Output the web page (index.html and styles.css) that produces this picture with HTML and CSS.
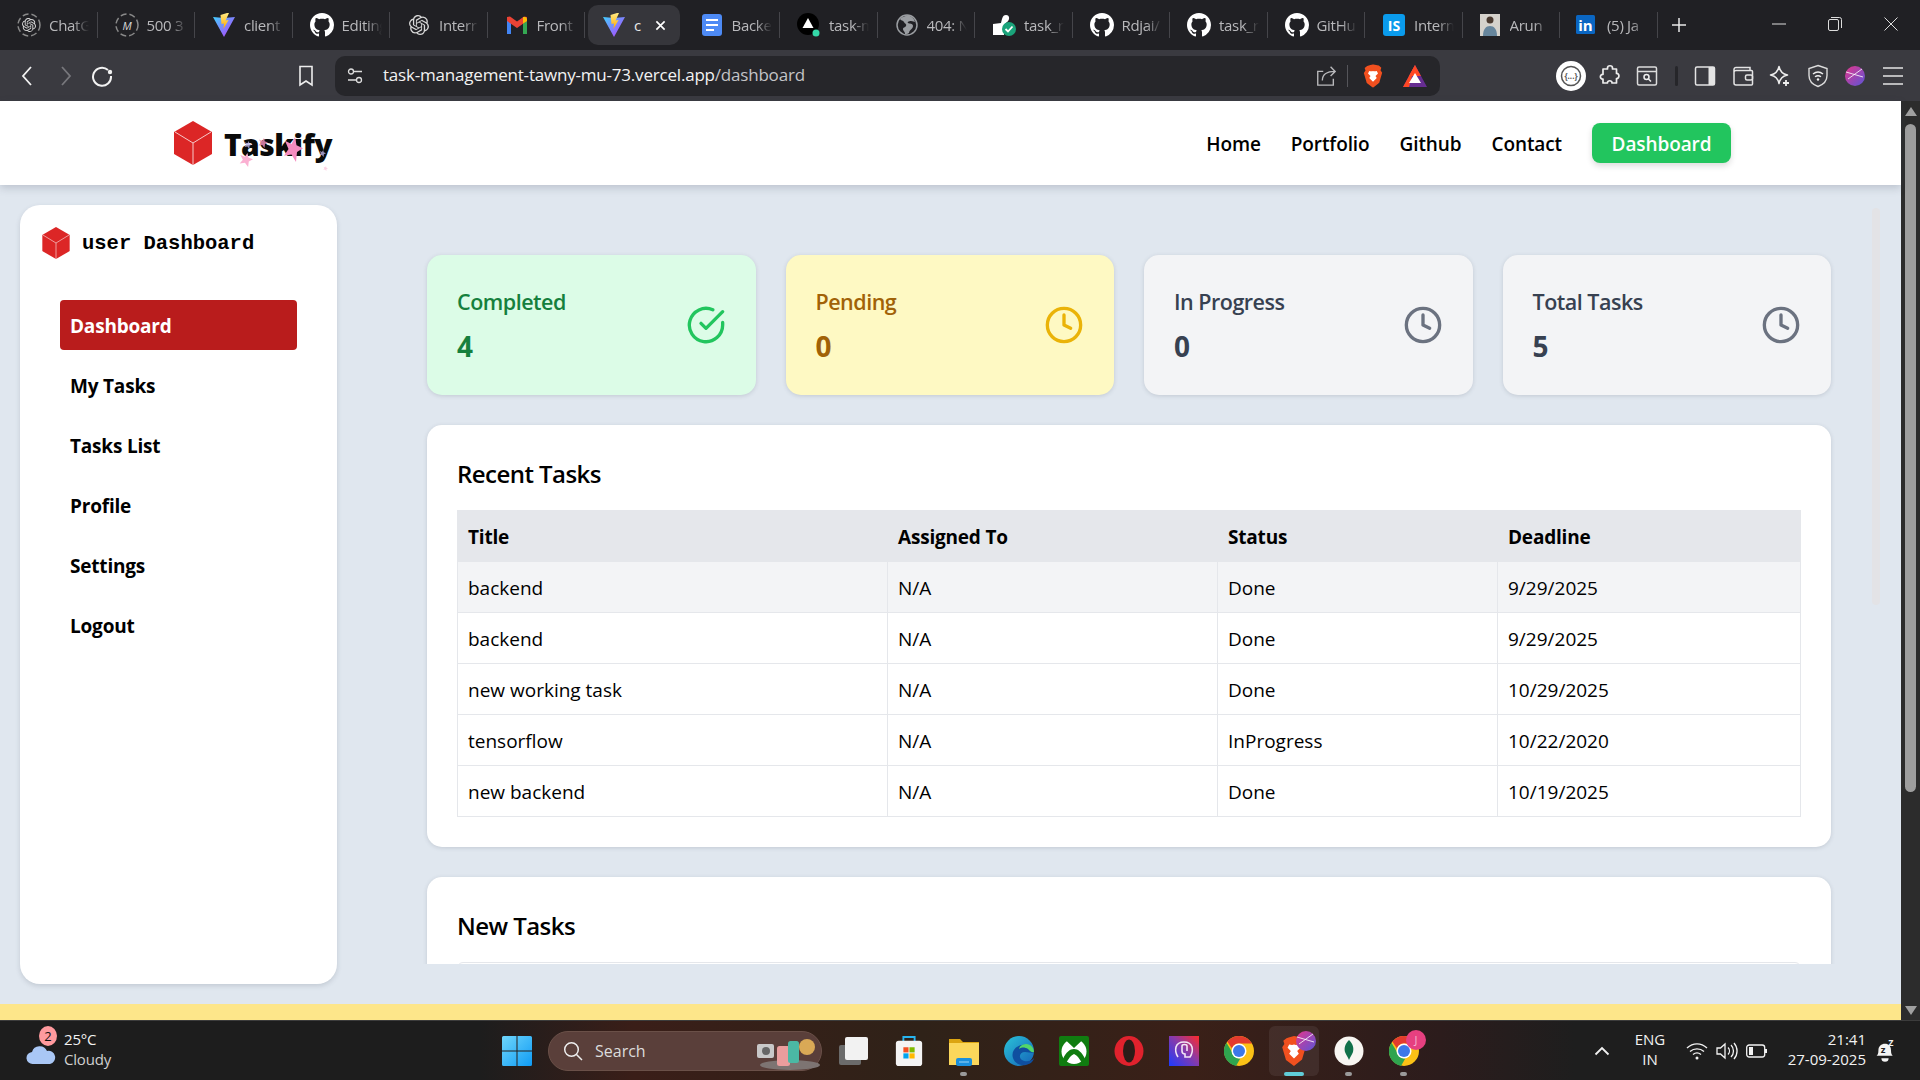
FILE: index.html
```html
<!DOCTYPE html>
<html lang="en">
<head>
<meta charset="utf-8">
<title>Taskify</title>
<link rel="stylesheet" href="styles.css">
</head>
<body>
<svg class="defs" width="0" height="0" aria-hidden="true">
  <defs>
    <linearGradient id="vb" x1="0" y1="0" x2="1" y2="1"><stop offset="0" stop-color="#41d1ff"/><stop offset="1" stop-color="#bd34fe"/></linearGradient>
    <linearGradient id="vy" x1="0" y1="0" x2="0" y2="1"><stop offset="0" stop-color="#ffea83"/><stop offset="1" stop-color="#ffa800"/></linearGradient>
    <linearGradient id="prof" x1="0" y1="0" x2="1" y2="1"><stop offset="0" stop-color="#e5368c"/><stop offset="1" stop-color="#5a55d8"/></linearGradient>
    <linearGradient id="winl" x1="0" y1="0" x2="1" y2="1"><stop offset="0" stop-color="#6fd6fb"/><stop offset="1" stop-color="#0f9bf5"/></linearGradient>
    <linearGradient id="purp" x1="0" y1="1" x2="1" y2="0"><stop offset="0" stop-color="#1d3bff"/><stop offset=".55" stop-color="#8a3aa8"/><stop offset="1" stop-color="#ff2a2a"/></linearGradient>
    <linearGradient id="edge" x1="0" y1="0" x2="1" y2="1"><stop offset="0" stop-color="#2bc3d8"/><stop offset="1" stop-color="#1463b8"/></linearGradient>
    <symbol id="gh" viewBox="0 0 16 16"><path fill="#fff" d="M8 0C3.58 0 0 3.58 0 8c0 3.54 2.29 6.53 5.47 7.59.4.07.55-.17.55-.38 0-.19-.01-.82-.01-1.49-2.01.37-2.53-.49-2.69-.94-.09-.23-.48-.94-.82-1.13-.28-.15-.68-.52-.01-.53.63-.01 1.08.58 1.23.82.72 1.21 1.87.87 2.33.66.07-.52.28-.87.51-1.07-1.78-.2-3.64-.89-3.64-3.95 0-.87.31-1.59.82-2.15-.08-.2-.36-1.02.08-2.12 0 0 .67-.21 2.2.82.64-.18 1.32-.27 2-.27.68 0 1.36.09 2 .27 1.53-1.04 2.2-.82 2.2-.82.44 1.1.16 1.92.08 2.12.51.56.82 1.27.82 2.15 0 3.07-1.87 3.75-3.65 3.95.29.25.54.73.54 1.48 0 1.07-.01 1.93-.01 2.2 0 .21.15.46.55.38A8.013 8.013 0 0016 8c0-4.42-3.58-8-8-8z"/></symbol>
    <symbol id="knot" viewBox="0 0 24 24"><path fill="#d8d8d8" d="M22.2819 9.8211a5.9847 5.9847 0 0 0-.5157-4.9108 6.0462 6.0462 0 0 0-6.5098-2.9A6.0651 6.0651 0 0 0 4.9807 4.1818a5.9847 5.9847 0 0 0-3.9977 2.9 6.0462 6.0462 0 0 0 .7427 7.0966 5.98 5.98 0 0 0 .511 4.9107 6.051 6.051 0 0 0 6.5146 2.9001A5.9847 5.9847 0 0 0 13.2599 24a6.0557 6.0557 0 0 0 5.7718-4.2058 5.9894 5.9894 0 0 0 3.9977-2.9001 6.0557 6.0557 0 0 0-.7475-7.0729zm-9.022 12.6081a4.4755 4.4755 0 0 1-2.8764-1.0408l.1419-.0804 4.7783-2.7582a.7948.7948 0 0 0 .3927-.6813v-6.7369l2.02 1.1686a.071.071 0 0 1 .038.052v5.5826a4.504 4.504 0 0 1-4.4945 4.4944zm-9.6607-4.1254a4.4708 4.4708 0 0 1-.5346-3.0137l.142.0852 4.783 2.7582a.7712.7712 0 0 0 .7806 0l5.8428-3.3685v2.3324a.0804.0804 0 0 1-.0332.0615L9.74 19.9502a4.4992 4.4992 0 0 1-6.1408-1.6464zM2.3408 7.8956a4.485 4.485 0 0 1 2.3655-1.9728V11.6a.7664.7664 0 0 0 .3879.6765l5.8144 3.3543-2.0201 1.1685a.0757.0757 0 0 1-.071 0l-4.8303-2.7865A4.504 4.504 0 0 1 2.3408 7.872zm16.5963 3.8558L13.1038 8.364 15.1192 7.2a.0757.0757 0 0 1 .071 0l4.8303 2.7913a4.4944 4.4944 0 0 1-.6765 8.1042v-5.6772a.79.79 0 0 0-.407-.667zm2.0107-3.0231l-.142-.0852-4.7735-2.7818a.7759.7759 0 0 0-.7854 0L9.409 9.2297V6.8974a.0662.0662 0 0 1 .0284-.0615l4.8303-2.7866a4.4992 4.4992 0 0 1 6.6802 4.66zM8.3065 12.863l-2.02-1.1638a.0804.0804 0 0 1-.038-.0567V6.0742a4.4992 4.4992 0 0 1 7.3757-3.4537l-.142.0805L8.704 5.459a.7948.7948 0 0 0-.3927.6813zm1.0976-2.3654l2.602-1.4998 2.6069 1.4998v2.9994l-2.5974 1.4997-2.6067-1.4997Z"/></symbol>
    <symbol id="vite" viewBox="0 0 24 24"><path fill="url(#vb)" d="M1 4l11 1 11-1-11 20z"/><path fill="url(#vy)" d="M15 0 8.500 2 9.500 11l2.500-.6-.6 5.600 5.200-9-3 .6L17 0z"/></symbol>
    <symbol id="cube" viewBox="0 0 38 44"><path fill="#dc2626" d="M19 0 38 11v22L19 44 0 33V11z"/><path fill="none" stroke="#f6c9c9" stroke-width="1" d="M1 11 19 22 37 11M19 22v22"/></symbol>
    <symbol id="clock" viewBox="0 0 24 24"><circle cx="12" cy="12" r="10" fill="none" stroke="currentColor" stroke-width="2"/><path d="M12 6v6l4 2" fill="none" stroke="currentColor" stroke-width="2" stroke-linecap="round" stroke-linejoin="round"/></symbol>
    <symbol id="star" viewBox="0 0 20 20"><path fill="currentColor" d="M12 0 13.500 6.500 20 9 14 12 13 20 8.500 14 1 15 5.500 9.500 2 3 8.500 5.500z"/></symbol>
    <symbol id="chrome" viewBox="0 0 30 30"><circle cx="15" cy="15" r="15" fill="#fbc116"/><path fill="#e33b2e" d="M15 0a15 15 0 0 1 13 7.500H15a7.500 7.500 0 0 0-7 5L3.300 5.600A15 15 0 0 1 15 0z"/><path fill="#2fa44f" d="M2.500 6.800 9.800 19a7.500 7.500 0 0 0 6.500 3.500L12 30A15 15 0 0 1 2.500 6.800z"/><circle cx="15" cy="15" r="7.500" fill="#fff"/><circle cx="15" cy="15" r="6" fill="#3c78e8"/></symbol>
    <symbol id="brave" viewBox="0 0 24 28"><path fill="#f1501f" d="M12 0l5 1 2 .5 3 2.500-1 3 2 3-3.500 12L12 28l-7.500-5.500L1 10.500l2-3-1-3 3-2.500 2-.5z"/><path fill="#fff" d="M12 8c1 .6 3 .4 4.500 0l1.500 3-3 3 1.500 2.500L12 21l-4.500-4.500L9 14l-3-3 1.500-3c1.500.4 3.500.6 4.500 0z"/></symbol>
  </defs>
</svg>

<header class="tabstrip">
  <div class="tab"><svg class="tab-ico" viewBox="0 0 24 24"><circle cx="12" cy="12" r="11" fill="none" stroke="#8a8a8a" stroke-width="1.5" stroke-dasharray="6 3"/><use href="#knot" x="5" y="5" width="14" height="14"/></svg><span class="tab-text">ChatGPT</span></div>
  <div class="tab"><svg class="tab-ico" viewBox="0 0 24 24"><circle cx="12" cy="12" r="11" fill="none" stroke="#8a8a8a" stroke-width="1.5" stroke-dasharray="6 3"/><text x="12" y="16.500" text-anchor="middle" class="m-ico">M</text></svg><span class="tab-text">500 3</span></div>
  <div class="tab"><svg class="tab-ico" viewBox="0 0 24 24"><use href="#vite"/></svg><span class="tab-text">client</span></div>
  <div class="tab"><svg class="tab-ico" viewBox="0 0 24 24"><use href="#gh"/></svg><span class="tab-text">Editing</span></div>
  <div class="tab"><svg class="tab-ico tab-ico-sm" viewBox="0 0 24 24"><use href="#knot"/></svg><span class="tab-text">Interr</span></div>
  <div class="tab"><svg class="tab-ico" viewBox="0 0 24 24"><path fill="#4285f4" d="M2 7v14h4V10z"/><path fill="#34a853" d="M18 10v11h4V7z"/><path fill="#ea4335" d="M2 4v4l10 7 10-7V4l-3-.5-7 5-7-5z"/><path fill="#fbbc04" d="M18 4h2.500L22 5.500V8l-4 2.500z"/></svg><span class="tab-text">Front</span></div>
  <div class="tab tab-active"><svg class="tab-ico" viewBox="0 0 24 24"><use href="#vite"/></svg><span class="tab-text tab-text-short">c</span><svg class="tab-x" viewBox="0 0 12 12"><path d="M1.500 1.500l9 9M10.500 1.500l-9 9" stroke="#fff" stroke-width="1.800" fill="none"/></svg></div>
  <div class="tab"><svg class="tab-ico" viewBox="0 0 24 24"><rect x="2" y="1" width="20" height="22" rx="3" fill="#4d8af5"/><path d="M6 7h12M6 12h12M6 17h8" stroke="#fff" stroke-width="2.200"/></svg><span class="tab-text">Backe</span></div>
  <div class="tab"><svg class="tab-ico" viewBox="0 0 24 24"><circle cx="11" cy="11" r="11" fill="#000"/><path d="M11 5l5.500 10h-11z" fill="#fff"/><circle cx="19" cy="20" r="3.500" fill="#34d8a8"/></svg><span class="tab-text">task-m</span></div>
  <div class="tab"><svg class="tab-ico" viewBox="0 0 24 24"><circle cx="12" cy="12" r="10" fill="none" stroke="#9a9da1" stroke-width="1.500"/><path fill="#9a9da1" d="M12 2c-1 2-5 1-7 4 1 2 3 1 4 3s3 2 2 4-3 1-3 3 2 2 2 5c1 0 3 0 4-1 0-3 4-4 4-7s-4-2-5-3 1-2 3-2 3 1 4 1c-1-4-4-6-8-7z"/></svg><span class="tab-text">404: N</span></div>
  <div class="tab"><svg class="tab-ico" viewBox="0 0 24 24"><path d="M1 11l8-1c1-3 1-8 5-8 4 0 4 5 1 7l-3 3v10H1z" fill="#fff"/><circle cx="17" cy="16" r="7" fill="#1aa37a"/><path d="M13.500 16l2.500 2.500 4.500-5" stroke="#fff" stroke-width="1.800" fill="none"/></svg><span class="tab-text">task_r</span></div>
  <div class="tab"><svg class="tab-ico" viewBox="0 0 24 24"><use href="#gh"/></svg><span class="tab-text">Rdjai/</span></div>
  <div class="tab"><svg class="tab-ico" viewBox="0 0 24 24"><use href="#gh"/></svg><span class="tab-text">task_r</span></div>
  <div class="tab"><svg class="tab-ico" viewBox="0 0 24 24"><use href="#gh"/></svg><span class="tab-text">GitHu</span></div>
  <div class="tab"><svg class="tab-ico" viewBox="0 0 24 24"><rect x="1" y="1" width="22" height="22" rx="3" fill="#0a9bec"/><text x="12" y="17.500" text-anchor="middle" class="is-ico">IS</text></svg><span class="tab-text">Intern</span></div>
  <div class="tab tab-tight"><svg class="tab-ico" viewBox="0 0 24 24"><rect x="2" y="1" width="20" height="22" fill="#d5d2cc"/><circle cx="12" cy="7" r="3.500" fill="#4a3a30"/><path d="M5 23c0-7 3-10 7-10s7 3 7 10z" fill="#66859c"/></svg><span class="tab-text">Arun</span></div>
  <div class="tab tab-last"><svg class="tab-ico" viewBox="0 0 24 24"><rect x="3" y="2" width="19" height="19" rx="1.500" fill="#0a66c2"/><text x="12.500" y="18" text-anchor="middle" class="in-ico">in</text></svg><span class="tab-text">(5) Ja</span></div>
  <svg class="plus" viewBox="0 0 14 14"><path d="M7 0v14M0 7h14" stroke="#e8e8e8" stroke-width="1.500"/></svg>
  <div class="winctl">
    <svg class="wc" viewBox="0 0 14 14"><path d="M0 7h14" stroke="#ddd" stroke-width="1"/></svg>
    <svg class="wc" viewBox="0 0 14 14"><rect x=".5" y="2.500" width="10" height="11" rx="1.500" fill="none" stroke="#ddd"/><path d="M3 .5h8.500a2 2 0 0 1 2 2V11" fill="none" stroke="#ddd"/></svg>
    <svg class="wc" viewBox="0 0 14 14"><path d="M.5.500l13 13M13.500.500l-13 13" stroke="#ddd" stroke-width="1"/></svg>
  </div>
</header>

<nav class="toolbar">
  <div class="tb-left">
    <svg class="tb-ico" viewBox="0 0 24 24"><path d="M16 3 8 12l8 9" fill="none" stroke="#f2f2f2" stroke-width="1.800"/></svg>
    <svg class="tb-ico" viewBox="0 0 24 24"><path d="M9 3l8 9-8 9" fill="none" stroke="#77777c" stroke-width="1.800"/></svg>
    <svg class="tb-ico" viewBox="0 0 24 24"><path d="M17 6a9 9 0 1 0 3 6" fill="none" stroke="#f2f2f2" stroke-width="2"/><circle cx="19" cy="8" r="2.200" fill="#f2f2f2"/></svg>
  </div>
  <svg class="tb-ico bookmark" viewBox="0 0 24 24"><path d="M6 2.500h12V21l-6-4-6 4z" fill="none" stroke="#ededed" stroke-width="1.600"/></svg>
  <div class="omnibox">
    <svg class="site-ico" viewBox="0 0 18 18"><circle cx="5" cy="4.500" r="2.500" fill="none" stroke="#ddd" stroke-width="1.300"/><path d="M8 4.500h8M2 13h8" stroke="#ddd" stroke-width="1.300"/><circle cx="13" cy="13" r="2.500" fill="none" stroke="#ddd" stroke-width="1.300"/></svg>
    <span class="url"><span class="url-host">task-management-tawny-mu-73.vercel.app</span>/dashboard</span>
    <svg class="share" viewBox="0 0 24 24"><path d="M9 7H3v15h17v-7M8 17c0-6 4-10 14-10M17 2l5 5-5 5" fill="none" stroke="#b9b9bc" stroke-width="1.500"/></svg>
    <span class="omni-sep"></span>
    <svg class="brave-sm" viewBox="0 0 24 28"><use href="#brave"/></svg>
    <svg class="bat" viewBox="0 0 24 22"><path d="M12 0l12 22H0z" fill="#662d91"/><path d="M12 0l6 11H6z" fill="#ff4724"/><path d="M0 22 12 0 6 22z" fill="#ff4724"/><path d="M12 8l6 10H6z" fill="#fff"/></svg>
  </div>
  <div class="tb-right">
    <svg class="tb-ext" viewBox="0 0 30 30"><circle cx="15" cy="15" r="15" fill="#fff"/><circle cx="15" cy="15" r="9.500" fill="none" stroke="#555" stroke-width="1.500"/><text x="15" y="18" text-anchor="middle" class="ext-text">{...}</text></svg>
    <svg class="tb-ext" viewBox="0 0 24 24"><path d="M9.500 4c0-3 5-3 5 0v1h4v4.500c3-.5 3.500 5 0 5V19h-4.500c.5-3-5-3-4.500 0H5v-4c-3.500.5-3.500-5 0-4.500V5h4.500z" fill="none" stroke="#ededed" stroke-width="1.700" stroke-linejoin="round"/></svg>
    <svg class="tb-ext" viewBox="0 0 24 24"><rect x="2.500" y="3" width="19" height="18" rx="1.500" fill="none" stroke="#dcdcdc" stroke-width="1.500"/><path d="M2.500 7.500h19" stroke="#dcdcdc" stroke-width="1.500"/><circle cx="11.500" cy="13" r="2.500" fill="none" stroke="#eee" stroke-width="1.500"/><path d="M13.500 15l2.500 2.500" stroke="#eee" stroke-width="1.500"/></svg>
    <span class="tb-sep"></span>
    <svg class="tb-ext" viewBox="0 0 24 24"><rect x="2.500" y="3" width="19" height="18" rx="1.500" fill="none" stroke="#e4e4e4" stroke-width="1.500"/><rect x="15.500" y="3" width="6" height="18" fill="#e4e4e4"/></svg>
    <svg class="tb-ext" viewBox="0 0 24 24"><path d="M3 8V5.500A2 2 0 0 1 5 3.500h14v3M3 8a2 2 0 0 1 2-1.500h15.500a1 1 0 0 1 1 1V20a1 1 0 0 1-1 1H5a2 2 0 0 1-2-2z" fill="none" stroke="#e4e4e4" stroke-width="1.500"/><rect x="14.500" y="11" width="7" height="5" rx="1.500" fill="none" stroke="#e4e4e4" stroke-width="1.500"/></svg>
    <svg class="tb-ext" viewBox="0 0 24 24"><path d="M11 2.500c1 5 3 7.500 8.500 8.500-5.500 1-7.500 3.500-8.500 8.500-1-5-3-7.500-8.500-8.500 5.500-1 7.500-3.500 8.500-8.500z" fill="none" stroke="#ededed" stroke-width="1.500" stroke-linejoin="round"/><path d="M18 16v6M15 19h6" stroke="#ededed" stroke-width="1.800"/></svg>
    <svg class="tb-ext" viewBox="0 0 24 24"><path d="M12 1.500l9 3v7c0 5.500-3.500 9-9 11-5.500-2-9-5.500-9-11v-7z" fill="none" stroke="#dcdcdc" stroke-width="1.400"/><path d="M7 10c3-2.500 7-2.500 10 0M9 12.800c2-1.500 4-1.500 6 0" fill="none" stroke="#eee" stroke-width="1.400"/><circle cx="12" cy="15.500" r="1.200" fill="#eee"/></svg>
    <svg class="tb-ext tb-prof" viewBox="0 0 20 20"><circle cx="10" cy="10" r="10" fill="url(#prof)"/><path d="M1 6l17 5M3 13 17 3" stroke="#fff" stroke-width=".8"/></svg>
    <svg class="tb-ext" viewBox="0 0 24 24"><path d="M2 4h20M2 12h20M2 20h20" stroke="#e4e4e4" stroke-width="1.500"/></svg>
  </div>
</nav>

<div class="viewport">
  <div class="page">
    <div class="sitebar">
      <div class="brand">
        <svg class="brand-cube" viewBox="0 0 38 44"><use href="#cube"/></svg>
        <span class="brand-name">Taskify</span>
        <svg class="spark spark-e" viewBox="0 0 20 20"><use href="#star"/></svg>
        <svg class="spark spark-f" viewBox="0 0 20 20"><use href="#star"/></svg>
        <svg class="spark spark-a" viewBox="0 0 20 20"><use href="#star"/></svg>
        <svg class="spark spark-b" viewBox="0 0 20 20"><use href="#star"/></svg>
        <svg class="spark spark-c" viewBox="0 0 20 20" preserveAspectRatio="none"><use href="#star"/></svg>
        <svg class="spark spark-d" viewBox="0 0 20 20"><use href="#star"/></svg>
      </div>
      <div class="sitelinks">
        <a class="sitelink">Home</a>
        <a class="sitelink">Portfolio</a>
        <a class="sitelink">Github</a>
        <a class="sitelink">Contact</a>
        <a class="cta">Dashboard</a>
      </div>
    </div>

    <div class="workspace">
      <aside class="sidebar">
        <div class="side-head">
          <svg class="side-cube" viewBox="0 0 38 44"><use href="#cube"/></svg>
          <span class="side-title">user Dashboard</span>
        </div>
        <ul class="side-menu">
          <li class="side-item side-item-active">Dashboard</li>
          <li class="side-item">My Tasks</li>
          <li class="side-item">Tasks List</li>
          <li class="side-item">Profile</li>
          <li class="side-item">Settings</li>
          <li class="side-item">Logout</li>
        </ul>
      </aside>

      <main class="main">
        <span class="ghost-track"></span>
        <section class="stats">
          <div class="stat stat-green">
            <div><p class="stat-label">Completed</p><p class="stat-value">4</p></div>
            <svg class="stat-ico ico-green" viewBox="0 0 24 24"><path d="M22 10.500V12a10 10 0 1 1-5.900-9.100" fill="none" stroke="currentColor" stroke-width="2" stroke-linecap="round"/><path d="M22 4 12 14l-3-3" fill="none" stroke="currentColor" stroke-width="2" stroke-linecap="round" stroke-linejoin="round"/></svg>
          </div>
          <div class="stat stat-yellow">
            <div><p class="stat-label">Pending</p><p class="stat-value">0</p></div>
            <svg class="stat-ico ico-yellow" viewBox="0 0 24 24"><use href="#clock"/></svg>
          </div>
          <div class="stat stat-gray">
            <div><p class="stat-label">In Progress</p><p class="stat-value">0</p></div>
            <svg class="stat-ico ico-gray" viewBox="0 0 24 24"><use href="#clock"/></svg>
          </div>
          <div class="stat stat-gray">
            <div><p class="stat-label">Total Tasks</p><p class="stat-value">5</p></div>
            <svg class="stat-ico ico-gray" viewBox="0 0 24 24"><use href="#clock"/></svg>
          </div>
        </section>

        <section class="panel">
          <h2 class="panel-title">Recent Tasks</h2>
          <table class="tasks">
            <colgroup><col class="c1"><col class="c2"><col class="c3"><col class="c4"></colgroup>
            <thead><tr><th>Title</th><th>Assigned To</th><th>Status</th><th>Deadline</th></tr></thead>
            <tbody>
              <tr class="row-alt"><td>backend</td><td>N/A</td><td>Done</td><td>9/29/2025</td></tr>
              <tr><td>backend</td><td>N/A</td><td>Done</td><td>9/29/2025</td></tr>
              <tr><td>new working task</td><td>N/A</td><td>Done</td><td>10/29/2025</td></tr>
              <tr><td>tensorflow</td><td>N/A</td><td>InProgress</td><td>10/22/2020</td></tr>
              <tr><td>new backend</td><td>N/A</td><td>Done</td><td>10/19/2025</td></tr>
            </tbody>
          </table>
        </section>

        <section class="panel panel-last">
          <h2 class="panel-title">New Tasks</h2>
          <div class="stub-table"></div>
        </section>
      </main>
    </div>

    <div class="footer-strip"></div>
  </div>
  <div class="scrollbar">
    <span class="sb-arrow sb-up"></span>
    <span class="sb-thumb"></span>
    <span class="sb-arrow sb-down"></span>
  </div>
</div>

<footer class="taskbar">
  <div class="weather">
    <svg class="cloud" viewBox="0 0 30 22"><path d="M7 21a6 6 0 0 1-1-12 8 8 0 0 1 15-1 6.500 6.500 0 0 1 3 13z" fill="#a9c7f5"/></svg>
    <span class="w-badge">2</span>
    <div class="w-text"><span>25°C</span><span class="w-sub">Cloudy</span></div>
  </div>
  <div class="tb-center">
    <svg class="winlogo" viewBox="0 0 30 30"><path fill="url(#winl)" d="M0 1.500A1.500 1.500 0 0 1 1.500 0H14.500V14.500H0zM15.500 0H28.500A1.500 1.500 0 0 1 30 1.500V14.500H15.500zM0 15.500H14.500V30H1.500A1.500 1.500 0 0 1 0 28.500zM15.500 15.500H30V28.500A1.500 1.500 0 0 1 28.500 30H15.500z"/></svg>
    <div class="searchbox">
      <svg class="search-ico" viewBox="0 0 20 20"><circle cx="8.500" cy="8.500" r="6.800" fill="none" stroke="#eee" stroke-width="1.500"/><path d="M13.500 13.500 19 19" stroke="#eee" stroke-width="1.500"/></svg>
      <span class="search-text">Search</span>
      <svg class="search-art" viewBox="0 0 64 32"><ellipse cx="33" cy="26" rx="30" ry="5" fill="#7d7472"/><rect x="0" y="5" width="17" height="14" rx="2" fill="#c8c8c8"/><circle cx="9" cy="12" r="4" fill="#666"/><rect x="20" y="7" width="13" height="20" rx="2.500" fill="#ea9d9d"/><rect x="31" y="2" width="11" height="22" rx="2.500" fill="#4bb8a4"/><circle cx="50" cy="8" r="8" fill="#d9a956"/></svg>
    </div>
    <div class="apps">
      <span class="app"><svg viewBox="0 0 30 30"><rect x="0" y="9" width="22" height="20" rx="2" fill="#6b6b6b"/><rect x="6" y="1" width="23" height="23" rx="2" fill="#f2f2f2"/></svg></span>
      <span class="app"><svg viewBox="0 0 30 32"><path d="M9 6V1h12v5" fill="none" stroke="#27b5ef" stroke-width="2"/><rect x="1" y="5" width="28" height="27" rx="3" fill="#f4f4f4"/><rect x="9" y="12" width="5.500" height="5.500" fill="#f25022"/><rect x="15.500" y="12" width="5.500" height="5.500" fill="#7fba00"/><rect x="9" y="18.500" width="5.500" height="5.500" fill="#00a4ef"/><rect x="15.500" y="18.500" width="5.500" height="5.500" fill="#ffb900"/></svg></span>
      <span class="app"><svg viewBox="0 0 30 30"><path d="M0 3h11l3 3h16v23H0z" fill="#dca511"/><rect x="0" y="7" width="30" height="22" fill="#fbd75b"/><rect x="7" y="22" width="16" height="8" rx="2" fill="#1a8fdc"/><path d="M10 26h10" stroke="#9ad6f8"/></svg><i class="dot"></i></span>
      <span class="app"><svg viewBox="0 0 30 30"><circle cx="15" cy="15" r="15" fill="url(#edge)"/><path d="M30 17c0-6-6-9-12-8-7 1-11 7-9 13 1.500 5 7 8 13 7 4-1 7-3 8-7-3 4-9 4-12 2-4-3-2-8 3-8 3 0 5 1 9 1z" fill="#0f4fa0"/><path d="M30 16c0-4-3-8-8-8-4 0-7 3-7 5 2-2 6-2 9 0 2 2 4 4 6 3z" fill="#52d66a"/></svg></span>
      <span class="app"><svg viewBox="0 0 30 30"><rect width="30" height="30" rx="2" fill="#107c10"/><circle cx="15" cy="15.500" r="12.500" fill="#fff"/><path d="M6 3.500 15 12l9-8.500v-3H6zM4 23c3-7 7-10 11-10 4 0 8 3 11 10l-3 4c-3-5-5-8-8-9-3 1-5 4-8 9z" fill="#107c10"/></svg></span>
      <span class="app"><svg viewBox="0 0 30 30"><ellipse cx="15" cy="15" rx="14.500" ry="15" fill="#e0222d"/><ellipse cx="15" cy="15" rx="6" ry="11.500" fill="#2a1c18"/></svg></span>
      <span class="app"><svg viewBox="0 0 30 30"><rect width="30" height="30" fill="url(#purp)"/><path d="M9 21c-2-3-3-6-2-10 1-3 4-5 8-5s7 2 8 5c1 4 0 7-2 10h-5v-3c-2 0-3-1-3-3v-5c0-2 5-2 5 0v5" fill="none" stroke="#f2e4f5" stroke-width="1.600"/></svg></span>
      <span class="app"><svg viewBox="0 0 30 30"><use href="#chrome"/></svg></span>
      <span class="app app-active"><svg class="brave-big" viewBox="0 0 24 28"><use href="#brave"/></svg><svg class="pwa-badge" viewBox="0 0 20 20"><circle cx="10" cy="10" r="10" fill="url(#prof)"/><path d="M1 6l17 5M3 13 17 3" stroke="#fff" stroke-width=".8"/></svg><i class="dot dot-active"></i></span>
      <span class="app"><svg viewBox="0 0 30 30"><circle cx="15" cy="15" r="14.500" fill="#f8f6f2"/><path d="M15 4c4 4 5 8 4 12-1 3-3 5-4 8-1-3-3-5-4-8-1-4 0-8 4-12z" fill="#11714a"/></svg><i class="dot"></i></span>
      <span class="app"><svg viewBox="0 0 30 30"><use href="#chrome"/></svg><span class="j-badge">J</span><i class="dot"></i></span>
    </div>
  </div>
  <div class="tray">
    <svg class="chev" viewBox="0 0 16 10"><path d="M1.500 8.500 8 2l6.500 6.500" fill="none" stroke="#f2f2f2" stroke-width="1.800"/></svg>
    <div class="lang"><span>ENG</span><span>IN</span></div>
    <svg class="tr-wifi" viewBox="0 0 22 18"><path d="M1 6c6-5.500 14-5.500 20 0M4 9.500c4-3.500 10-3.500 14 0M7 12.500c2.500-2 5.500-2 8 0" fill="none" stroke="#f2f2f2" stroke-width="1.400"/><circle cx="11" cy="16" r="1.500" fill="#f2f2f2"/></svg>
    <svg class="tr-vol" viewBox="0 0 22 18"><path d="M1 6h3.500L9 2v14l-4.500-4H1z" fill="none" stroke="#f2f2f2" stroke-width="1.300"/><path d="M12 5.500a5 5 0 0 1 0 7M15 3a8.500 8.500 0 0 1 0 12M18 1a12 12 0 0 1 0 16" fill="none" stroke="#f2f2f2" stroke-width="1.300"/></svg>
    <svg class="tr-bat" viewBox="0 0 22 14"><rect x=".7" y="1" width="18" height="12" rx="2.500" fill="none" stroke="#f2f2f2" stroke-width="1.300"/><rect x="3" y="3" width="4" height="8" fill="#f2f2f2"/><path d="M20 5v4" stroke="#f2f2f2" stroke-width="2"/></svg>
    <div class="clock"><span>21:41</span><span>27-09-2025</span></div>
    <svg class="bell" viewBox="0 0 20 20"><path d="M3 14c1-1 1.500-2 1.500-4.500C4.500 6 7 4 10 4s5 2 5 5.500c0 2.500.5 3.500 1.500 4.500z" fill="#f4f4f4"/><path d="M7 16a3 3 0 0 0 6 0z" fill="#f4f4f4"/><text x="6.500" y="12" class="zz1">z</text><text x="13" y="6" class="zz2">Z</text></svg>
  </div>
</footer>
</body>
</html>
```

FILE: styles.css
```css
* { box-sizing: border-box; margin: 0; padding: 0; }
html, body { height: 100%; overflow: hidden; }
body {
  width: 1920px;
  height: 1080px;
  display: flex;
  flex-direction: column;
  font-family: "Open Sans", "Noto Sans", sans-serif;
  background: #202024;
}
.defs { position: absolute; }

/* ---------- tab strip ---------- */
.tabstrip {
  height: 50px;
  flex: none;
  display: flex;
  align-items: center;
  background: #202024;
  color: #b8b8bb;
  font-size: 15px;
}
.tab {
  width: 97.500px;
  height: 40px;
  flex: none;
  display: flex;
  align-items: center;
  padding-left: 17px;
  gap: 8px;
  border-right: 1px solid #45454a;
  border-image: linear-gradient(transparent 20%, #45454a 20%, #45454a 80%, transparent 80%) 1;
}
.tab-tight { padding-left: 15px; }
.tab-last { padding-left: 13px; gap: 10px; }
.tab-active {
  background: #36363b;
  border-radius: 10px;
  border: 0;
  width: 92px;
  margin: 0 2.500px 0 3px;
  padding-left: 14px;
  color: #e8e8e8;
}
.tab-ico { width: 24px; height: 24px; flex: none; }
.tab-ico-sm { width: 20px; height: 20px; margin: 0 2px; }
.tab-text {
  width: 40px;
  overflow: hidden;
  white-space: nowrap;
  -webkit-mask-image: linear-gradient(90deg, #000 60%, transparent 100%);
  mask-image: linear-gradient(90deg, #000 60%, transparent 100%);
  letter-spacing: -.3px;
}
.tab-text-short { width: 9px; -webkit-mask-image: none; mask-image: none; }
.tab-x { width: 11px; height: 11px; margin-left: 4px; flex: none; }
.m-ico { font: italic 500 11px "Open Sans", sans-serif; fill: #d8d8d8; }
.is-ico { font: 700 14px "Open Sans", sans-serif; fill: #fff; }
.in-ico { font: 700 15px "Open Sans", sans-serif; fill: #fff; }
.ext-text { font: 700 8px "Open Sans", sans-serif; fill: #555; }
.plus { width: 14px; height: 14px; margin-left: 14px; flex: none; }
.winctl {
  margin-left: auto;
  width: 236px;
  padding: 0 22px 2px 86px;
  display: flex;
  justify-content: space-between;
}
.wc { width: 14px; height: 14px; }

/* ---------- toolbar ---------- */
.toolbar {
  height: 51px;
  flex: none;
  display: flex;
  align-items: center;
  background: #3a3a40;
  padding-left: 8px;
}
.tb-left { display: flex; width: 280px; }
.tb-ico { width: 24px; height: 24px; margin: 0 7px; flex: none; }
.bookmark { margin: 0 0 0 6px; width: 24px; }
.omnibox {
  margin-left: 17px;
  width: 1105px;
  height: 40px;
  flex: none;
  display: flex;
  align-items: center;
  padding: 0 13px 0 11px;
  background: #26262a;
  border-radius: 10px;
  color: #c4c4c7;
  font-size: 17px;
}
.site-ico { width: 18px; height: 18px; flex: none; }
.url { margin-left: 19px; margin-bottom: 2px; flex: 1; white-space: nowrap; letter-spacing: -.2px; }
.url-host { color: #f2f2f2; }
.share { width: 22px; height: 22px; flex: none; }
.omni-sep { width: 1px; height: 22px; background: #55555a; margin: 0 15px 0 10px; }
.brave-sm { width: 20px; height: 24px; flex: none; }
.bat { width: 24px; height: 22px; margin-left: 20px; flex: none; }
.tb-right { margin-left: 116px; display: flex; align-items: center; gap: 13.500px; }
.tb-ext { width: 24px; height: 24px; flex: none; }
.tb-right .tb-ext:first-child { width: 30px; height: 30px; margin-right: -2px; }
.tb-sep { width: 3px; height: 20px; background: #26262a; border-radius: 2px; margin: 0 2px; }
.tb-right .tb-prof { width: 20px; height: 20px; margin: 0 2px; }

/* ---------- page ---------- */
.viewport { flex: 1; min-height: 0; display: flex; }
.page {
  width: 1901px;
  display: flex;
  flex-direction: column;
  background: #e0e7ef;
  color: #000;
}
.sitebar {
  height: 84px;
  flex: none;
  position: relative;
  z-index: 2;
  display: flex;
  align-items: center;
  justify-content: space-between;
  background: #fff;
  box-shadow: 0 3px 8px rgba(60, 70, 90, .22);
  padding: 0 170px 0 174px;
}
.brand { position: relative; display: flex; align-items: center; gap: 12px; }
.brand-cube { width: 38px; height: 44px; }
.brand-name { font-size: 30px; font-weight: 800; letter-spacing: -.6px; color: #0a0a0a; padding-top: 2px; }
.spark { position: absolute; color: #f58cc0; }
.spark-a { left: 65px; top: 32px; width: 14px; height: 14px; color: #fbb0d2; }
.spark-b { left: 84px; top: 17px; width: 10px; height: 10px; color: #e88cb4; opacity: .85; }
.spark-c { left: 109px; top: 16px; width: 20px; height: 25px; }
.spark-d { left: 149px; top: 45px; width: 5px; height: 5px; color: #fbd0e2; }
.spark-e { left: 70px; top: 20px; width: 8px; height: 8px; color: #b9b2e6; opacity: .8; }
.spark-f { left: 145px; top: 29px; width: 7px; height: 7px; color: #b9b2e6; opacity: .8; }
.sitelinks { display: flex; align-items: center; gap: 30px; font-size: 19px; font-weight: 600; letter-spacing: -.1px; }
.sitelink { padding-top: 2px; }
.cta {
  width: 139px;
  height: 40px;
  display: flex;
  align-items: center;
  justify-content: center;
  padding-top: 2px;
  color: #fff;
  font-weight: 600;
  background: #22c55e;
  border-radius: 8px;
  box-shadow: 0 3px 6px rgba(0, 0, 0, .14);
}

.workspace { flex: 1; min-height: 0; display: flex; }
.sidebar {
  width: 317px;
  flex: none;
  margin: 20px 0 0 20px;
  height: 779px;
  background: #fff;
  border-radius: 20px;
  box-shadow: 0 2px 5px rgba(60, 70, 90, .18);
  padding: 20px 40px 0;
}
.side-head { display: flex; align-items: center; gap: 12px; margin-left: -18px; height: 36px; }
.side-cube { width: 28px; height: 32px; flex: none; }
.side-title { font: 700 20.500px "Liberation Mono", monospace; white-space: nowrap; }
.side-menu { list-style: none; margin-top: 39px; display: flex; flex-direction: column; gap: 10px; }
.side-item {
  height: 50px;
  display: flex;
  align-items: center;
  padding: 2px 0 0 10px;
  font-size: 19px;
  font-weight: 700;
  letter-spacing: -.2px;
}
.side-item-active { background: #b91c1c; color: #fff; border-radius: 4px; }

.main {
  position: relative;
  flex: 1;
  min-width: 0;
  height: 779px;
  overflow: hidden;
  padding: 70px 70px 0 90px;
}
.ghost-track {
  position: absolute;
  top: 23px;
  right: 21px;
  width: 8px;
  height: 397px;
  background: #e3e3e6;
  border-radius: 4px;
}
.stats { display: grid; grid-template-columns: repeat(4, 1fr); gap: 30px; }
.stat {
  height: 140px;
  display: flex;
  align-items: center;
  justify-content: space-between;
  padding: 0 30px;
  border-radius: 15px;
  box-shadow: 0 1px 4px rgba(60, 70, 90, .18);
}
.stat-label { font-size: 21.500px; font-weight: 600; line-height: 30px; letter-spacing: -.5px; }
.stat-value { font-size: 28px; font-weight: 700; line-height: 36px; margin-top: 11px; }
.stat-ico { width: 40px; height: 40px; flex: none; }
.stat-green { background: #dcfce7; color: #15803d; }
.stat-yellow { background: #fef9c3; color: #a16207; }
.stat-gray { background: #f3f4f6; color: #374151; }
.ico-green { color: #22c55e; }
.ico-yellow { color: #eab308; }
.ico-gray { color: #6b7280; }

.panel {
  margin-top: 30px;
  background: #fff;
  border-radius: 15px;
  box-shadow: 0 1px 4px rgba(60, 70, 90, .18);
  padding: 30px;
}
.panel-title { font-size: 24px; font-weight: 600; line-height: 33px; padding-top: 2px; margin-bottom: 20px; letter-spacing: -.55px; }
.tasks { width: 100%; border-collapse: collapse; table-layout: fixed; font-size: 19px; }
.c1 { width: 430px; }
.c2 { width: 330px; }
.c3 { width: 280px; }
.tasks th, .tasks td {
  height: 51px;
  padding: 2px 10px 0;
  text-align: left;
  border: 1px solid #e5e7eb;
}
.tasks th { background: #e5e7eb; font-weight: 700; letter-spacing: -.2px; }
.row-alt { background: #f3f4f6; }
.stub-table { height: 60px; border: 1px solid #e5e7eb; border-radius: 6px; }

.footer-strip { height: 16px; flex: none; margin-top: 40px; background: #fde68a; }

/* ---------- scrollbar ---------- */
.scrollbar {
  width: 19px;
  flex: none;
  display: flex;
  flex-direction: column;
  align-items: center;
  background: #2c2c2c;
}
.sb-arrow { width: 0; height: 0; border-left: 6.500px solid transparent; border-right: 6.500px solid transparent; }
.sb-up { margin-top: 6px; border-bottom: 9px solid #a0a0a0; }
.sb-down { margin-bottom: 5px; border-top: 9px solid #a0a0a0; }
.sb-thumb { width: 11px; margin: 8px 0 auto; height: 668px; background: #9e9e9e; border-radius: 6px; }

/* ---------- taskbar ---------- */
.taskbar {
  height: 60px;
  flex: none;
  position: relative;
  display: flex;
  align-items: center;
  border-top: 1px solid #3c3c3c;
  background: linear-gradient(90deg, #1d1d1d 0, #1d1d1d 25%, #3a1e18 33%, #2f2218 48%, #3a2018 62%, #2c1c1c 75%, #1e1e1e 82%, #1e1e1e 100%);
  color: #f2f2f2;
}
.weather { position: relative; width: 502px; flex: none; display: flex; align-items: center; padding-left: 26px; }
.cloud { width: 30px; height: 22px; margin-top: 6px; flex: none; }
.w-badge {
  position: absolute;
  left: 39px;
  top: -3px;
  width: 18px;
  height: 20px;
  border-radius: 50%;
  background: #ff9a9e;
  color: #111;
  font-size: 13px;
  line-height: 20px;
  text-align: center;
}
.w-text { margin: 0 0 4px 8px; display: flex; flex-direction: column; font-size: 15px; line-height: 20px; letter-spacing: -.2px; }
.w-sub { color: #d0d0d0; }
.tb-center { display: flex; align-items: center; flex: none; width: 925px; }
.winlogo { width: 30px; height: 30px; flex: none; }
.searchbox {
  margin-left: 16px;
  width: 274px;
  height: 40px;
  flex: none;
  position: relative;
  display: flex;
  align-items: center;
  padding-left: 14px;
  border-radius: 20px;
  background: #5a3f3a;
  border: 1px solid #6a5048;
}
.search-ico { width: 20px; height: 20px; flex: none; }
.search-text { margin-left: 12px; font-size: 16px; color: #dcdcdc; }
.search-art { position: absolute; right: 0; top: 7px; width: 64px; height: 32px; }
.apps { margin-left: 4px; display: flex; align-items: center; }
.app {
  position: relative;
  width: 55px;
  height: 50px;
  flex: none;
  display: flex;
  align-items: center;
  justify-content: center;
}
.app svg { width: 30px; height: 30px; }
.app-active { background: rgba(255, 255, 255, .07); border-radius: 6px; width: 50px; margin: 0 2.500px; }
.app svg.brave-big { width: 26px; height: 30px; }
.app svg.pwa-badge { position: absolute; right: 3px; top: 5px; width: 20px; height: 20px; }
.dot { position: absolute; left: 50%; bottom: 0; width: 7px; height: 4px; margin-left: -3.500px; background: #9a9a9a; border-radius: 2px; }
.dot-active { width: 20px; margin-left: -10px; background: #60cdd8; }
.j-badge {
  position: absolute;
  left: 30px;
  top: 4px;
  width: 20px;
  height: 20px;
  border-radius: 50%;
  background: #e64080;
  color: #f5b5cf;
  font-size: 11px;
  line-height: 20px;
  text-align: center;
}
.tray { flex: 1; min-width: 0; display: flex; align-items: center; padding-left: 167px; }
.chev { width: 16px; height: 10px; flex: none; }
.lang { margin: 0 0 4px 18px; width: 44px; flex: none; display: flex; flex-direction: column; align-items: center; font-size: 15px; line-height: 20px; }
.tr-wifi { margin-left: 14px; width: 22px; height: 18px; flex: none; }
.tr-vol { margin-left: 8px; width: 22px; height: 18px; flex: none; }
.tr-bat { margin-left: 8px; width: 22px; height: 14px; flex: none; }
.clock { margin: 0 0 4px 8px; width: 90px; flex: none; display: flex; flex-direction: column; align-items: flex-end; font-size: 15px; line-height: 20px; }
.bell { margin-left: 7px; width: 24px; height: 24px; flex: none; }
.zz1 { font: 700 8px "Open Sans", sans-serif; fill: #222; }
.zz2 { font: 700 7px "Open Sans", sans-serif; fill: #f4f4f4; }
```
